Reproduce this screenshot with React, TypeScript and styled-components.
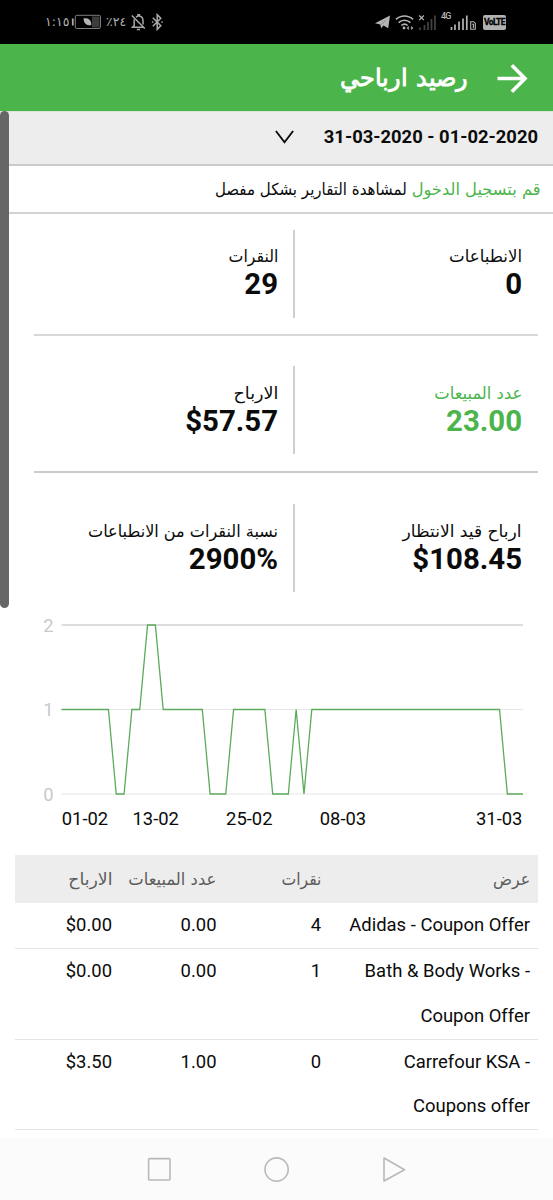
import React from 'react';
import styled, { createGlobalStyle } from 'styled-components';

const GREEN = '#4bb54b';
const LATIN = 'Roboto, sans-serif';
const ARABIC = '"DejaVu Sans", sans-serif';

const GlobalStyle = createGlobalStyle`
  * { box-sizing: border-box; }
  body {
    margin: 0;
    background: #fff;
    color: #0b0b0b;
    font-family: ${LATIN};
  }
`;

const Screen = styled.div`
  width: 553px;
  height: 1200px;
  display: flex;
  flex-direction: column;
  overflow: hidden;
  background: #fff;
`;

/* Status bar */

const StatusBar = styled.div`
  flex: none;
  height: 44px;
  padding: 0 47px 0 45px;
  display: flex;
  align-items: center;
  justify-content: space-between;
  background: #000;
  color: #b4b4b4;
`;

const StatusGroup = styled.div`
  height: 24px;
  display: flex;
  align-items: center;
`;

const StatusText = styled.span<{ $width: number; $gap?: number }>`
  flex: none;
  width: ${p => p.$width}px;
  margin-left: ${p => p.$gap ?? 0}px;
  font-family: ${ARABIC};
  font-size: 12.5px;
  line-height: 20px;
  direction: ltr;
  unicode-bidi: bidi-override;
  white-space: nowrap;
`;

const TimeText = styled(StatusText)`
  letter-spacing: -0.9px;
`;

const StatusIcon = styled.svg<{ $gap?: number }>`
  display: block;
  flex: none;
  margin-left: ${p => p.$gap ?? 0}px;
`;

const NetworkType = styled.span`
  align-self: flex-start;
  width: 9px;
  margin: 1px 0 0 4px;
  font: 500 9px/10px Roboto, sans-serif;
  letter-spacing: -0.9px;
`;

const VolteBadge = styled.span`
  width: 23px;
  height: 15px;
  margin-left: 7px;
  border-radius: 2px;
  background: #b2b2b2;
  color: #000;
  text-align: center;
  font: 700 8.5px/15px Roboto, sans-serif;
  letter-spacing: -0.6px;
  -webkit-text-stroke: 0.3px #000;
`;

/* Header */

const Header = styled.header`
  flex: none;
  height: 67px;
  padding: 0 25px 0 0;
  display: flex;
  align-items: center;
  gap: 29px;
  direction: rtl;
  background: ${GREEN};
  color: #fff;
`;

const Title = styled.h1`
  margin: 0;
  padding-top: 1px;
  font: 700 24px/32px ${LATIN};
  word-spacing: 2px;
  white-space: nowrap;
`;

/* Page content */

const Content = styled.main`
  position: relative;
  flex: 1;
  min-height: 0;
  direction: rtl;
`;

const ScrollThumb = styled.div`
  position: absolute;
  left: 0;
  top: 0;
  width: 9px;
  height: 497px;
  border-radius: 5px;
  background: #666;
`;

const DateBar = styled.div`
  height: 55px;
  padding: 0 15px 2px 0;
  display: flex;
  align-items: center;
  gap: 30px;
  border-top: 1px solid #d9e6d9;
  border-bottom: 2px solid #cbcbcb;
  background: #ededed;
`;

const DateRange = styled.span`
  direction: ltr;
  padding-bottom: 1px;
  font-size: 18.4px;
  font-weight: 700;
`;

const ArabicText = styled.span<{ $scale?: number; $tone?: string }>`
  display: inline-block;
  transform: scaleX(${p => p.$scale ?? 1});
  transform-origin: right center;
  color: ${p => p.$tone ?? 'inherit'};
  font-family: ${ARABIC};
  font-size: 16.6px;
  white-space: nowrap;
`;

const Notice = styled.div`
  height: 48px;
  padding: 1px 12px 0 0;
  display: flex;
  align-items: center;
  gap: 2.4px;
  border-bottom: 2px solid #d2d2d2;
`;

const Stats = styled.section`
  padding: 0 15px 0 34px;
`;

const StatRow = styled.div<{ $top: number; $bottom: number; $line?: string }>`
  display: grid;
  grid-template-columns: 243px 1fr;
  padding: ${p => p.$top}px 0 ${p => p.$bottom}px;
  border-bottom: ${p => (p.$line ? `2px solid ${p.$line}` : '0')};
`;

const StatCell = styled.div<{ $divided?: boolean; $green?: boolean; $inset: number }>`
  height: 88px;
  padding: ${p => p.$inset}px ${p => (p.$divided ? 15 : 16)}px 0 0;
  border-right: ${p => (p.$divided ? '2px solid #cfcfcf' : '0')};
  color: ${p => (p.$green ? GREEN : 'inherit')};
`;

const StatLabel = styled.div`
  height: 21px;
  line-height: 22px;
  display: flex;
  align-items: center;
`;

const StatValue = styled.div`
  direction: ltr;
  text-align: right;
  font-size: 29.4px;
  font-weight: 700;
  line-height: 34px;
`;

const Chart = styled.svg`
  display: block;
  direction: ltr;
  width: 553px;
  height: 263px;
  font: 18.4px ${LATIN};
`;

const Table = styled.section`
  padding: 0 15px;
`;

const TableRow = styled.div<{ $head?: boolean }>`
  display: grid;
  grid-template-columns: 209px 104.5px 104.5px 105px;
  line-height: ${p => (p.$head ? 50 : 44.6)}px;
  height: ${p => (p.$head ? '48px' : 'auto')};
  padding-bottom: ${p => (p.$head ? 0 : 0.4)}px;
  border-bottom: ${p => (p.$head ? '0' : '1px solid #e4e4e4')};
  background: ${p => (p.$head ? '#ededed' : 'transparent')};
  color: ${p => (p.$head ? '#5c5c5c' : 'inherit')};
`;

const Cell = styled.div`
  padding: 0 8px 0 8px;
  direction: ltr;
  text-align: right;
  font-size: 18.45px;
`;

const HeadCell = styled.div`
  padding-right: 8px;
  direction: rtl;
`;

const NavBar = styled.nav`
  flex: none;
  height: 62px;
  padding: 0 146px;
  display: flex;
  align-items: center;
  justify-content: space-between;
  background: #fbfbfb;
`;

type Stat = { label: string; value: string; scale: number; green?: boolean };

const stats: { top: number; bottom: number; inset: number; line?: string; cells: Stat[] }[] = [
  {
    top: 16,
    bottom: 16,
    inset: 16,
    line: '#d8d8d8',
    cells: [
      { label: 'الانطباعات', value: '0', scale: 1 },
      { label: 'النقرات', value: '29', scale: 0.95 },
    ],
  },
  {
    top: 30,
    bottom: 17,
    inset: 17,
    line: '#cbcbcb',
    cells: [
      { label: 'عدد المبيعات', value: '23.00', scale: 0.986, green: true },
      { label: 'الارباح', value: '$57.57', scale: 1.059 },
    ],
  },
  {
    top: 31,
    bottom: 0,
    inset: 17,
    cells: [
      { label: 'ارباح قيد الانتظار', value: '$108.45', scale: 1.03 },
      { label: 'نسبة النقرات من الانطباعات', value: '2900%', scale: 0.969 },
    ],
  },
];

const columns = [
  { label: 'عرض', scale: 0.946 },
  { label: 'نقرات', scale: 0.943 },
  { label: 'عدد المبيعات', scale: 0.986 },
  { label: 'الارباح', scale: 1.04 },
];

const offers = [
  ['Adidas - Coupon Offer', '4', '0.00', '$0.00'],
  ['Bath & Body Works - Coupon Offer', '1', '0.00', '$0.00'],
  ['Carrefour KSA - Coupons offer', '0', '1.00', '$3.50'],
];

/* Daily sales as [day index, value] corners, from 1 February to 31 March */
const series: [number, number][] = [
  [0, 1], [6, 1], [7, 0], [8, 0], [9, 1], [10, 1], [11, 2], [12, 2], [13, 1],
  [18, 1], [19, 0], [21, 0], [22, 1], [26, 1], [27, 0], [29, 0], [30, 1],
  [31, 0], [32, 1], [56, 1], [57, 0], [59, 0],
];

const chartX = (day: number) => 61.5 + (day * 461.5) / 59;
const chartY = (value: number) => 202 - value * 84.5;

const dateLabels: [string, number][] = [
  ['01-02', 85], ['13-02', 155.7], ['25-02', 249.3], ['08-03', 343], ['31-03', 499.2],
];

function SalesChart() {
  return (
    <Chart viewBox="0 0 553 263">
      {[2, 1, 0].map(v => (
        <g key={v}>
          <line
            x1="61.5"
            x2="523"
            y1={chartY(v)}
            y2={chartY(v)}
            stroke={v === 2 ? '#d2d2d2' : '#e6e6e6'}
            strokeWidth={v === 2 ? 1.6 : 1.2}
          />
          <text x="48.5" y={chartY(v) + 6.5} textAnchor="middle" fill="#c9c9c9">{v}</text>
        </g>
      ))}
      <polyline
        points={series.map(([d, v]) => `${chartX(d)},${chartY(v)}`).join(' ')}
        fill="none"
        stroke="#5cab5c"
        strokeWidth="1.3"
      />
      {dateLabels.map(([label, x]) => (
        <text key={label} x={x} y="233" textAnchor="middle" fill="#0b0b0b">{label}</text>
      ))}
    </Chart>
  );
}

function StatusIcons() {
  return (
    <StatusBar>
      <StatusGroup>
        <TimeText $width={26}>١:١٥</TimeText>
        <StatusIcon width="31" height="16" viewBox="0 0 31 16" fill="none">
          <path d="M1.8 4.5v7" stroke="#a9a9a9" strokeWidth="1.8" />
          <rect x="4.3" y="1.3" width="25.2" height="13.2" rx="1.6" stroke="#7c7c7c" strokeWidth="1" />
          <path d="M21 2.5h7.5v11H21z" fill="#3c3c3c" />
          <path d="M12.5 4.400c4-.4 8 .8 7.800 6.800-3.800.6-7.400-1-7.800-6.800z" fill="#b4b4b4" />
        </StatusIcon>
        <StatusText $width={22} $gap={4}>٪٢٤</StatusText>
        <StatusIcon $gap={3} width="15" height="17" viewBox="0 0 15 17" fill="none" stroke="#a9a9a9" strokeWidth="1.5">
          <path d="M.8 1.5l13 13" />
          <path d="M5 3.2C6 2.3 6.6 2.2 7 2V.8h1.4V2c2.5.6 3.6 2.5 3.6 4.7v3.8M3.2 5.3v6.2L1.6 13.2h11" />
          <path d="M5.8 15.5h3.3" />
        </StatusIcon>
        <StatusIcon $gap={5} width="13" height="18" viewBox="0 0 13 18" fill="none" stroke="#a9a9a9" strokeWidth="1.5">
          <path d="M1.8 4.8l8 8L6.2 16.4V1.6l3.6 3.6-8 8" />
          <path d="M.9 9h1.4M10.4 9h1.4" />
        </StatusIcon>
      </StatusGroup>
      <StatusGroup>
        <StatusIcon width="16" height="14" viewBox="0 0 16 14">
          <path d="M0 8.3L15 .5l-1.8 12.7-4.7-2.8-2.3 2.8-.9-3.7z" fill="#b4b4b4" />
          <path d="M6.3 9.5l4.200-4" stroke="#555" strokeWidth=".5" />
        </StatusIcon>
        <StatusIcon $gap={4} width="19" height="17" viewBox="0 0 19 17" fill="none" stroke="#b4b4b4" strokeWidth="1.6">
          <path d="M.9 5.400c5-4.600 12.200-4.600 17.200 0M3.600 8.600c3.400-3.100 8.400-3.100 11.800 0M6.300 11.500c1.900-1.600 4.500-1.600 6.400 0" />
          <circle cx="9" cy="14" r="1.4" fill="#b4b4b4" stroke="none" />
          <path d="M14 12.6l-1.6 1.4 1.6 1.4M16 12.6l1.6 1.4-1.6 1.4" strokeWidth="1.1" />
        </StatusIcon>
        <StatusIcon $gap={4} width="19" height="17" viewBox="0 0 19 17" fill="none">
          <path d="M1.2 1.5l4.6 4.6M5.8 1.5L1.2 6.1" stroke="#b4b4b4" strokeWidth="1.3" />
          <path d="M2 16v-2.5M6.5 16v-5M10 16V8M13.5 16V5M17 16V1.5" stroke="#444" strokeWidth="1.7" />
        </StatusIcon>
        <NetworkType>4G</NetworkType>
        <StatusIcon width="26" height="17" viewBox="0 0 26 17" fill="none">
          <path d="M1.5 16v-3M5 16v-5.5M9 16V7.5M13 16V4.5M16.8 16V1.5" stroke="#b4b4b4" strokeWidth="1.7" />
          <path d="M20.7 15.3V7.7h3l1.6 1.5v6.1z" stroke="#b4b4b4" strokeWidth="1.1" />
          <path d="M22.2 10.2h1.2v3.8" stroke="#b4b4b4" strokeWidth="1.1" />
        </StatusIcon>
        <VolteBadge>VoLTE</VolteBadge>
      </StatusGroup>
    </StatusBar>
  );
}

export default function App() {
  return (
    <Screen>
      <GlobalStyle />
      <StatusIcons />
      <Header>
        <svg width="31" height="32" viewBox="0 0 31 32" fill="none" stroke="#fff" strokeWidth="3.6">
          <path d="M.5 16.5h27.5M14.8 3.3l13.2 13.2-13.2 13.2" />
        </svg>
        <Title>رصيد ارباحي</Title>
      </Header>
      <Content>
        <DateBar>
          <DateRange>31-03-2020 - 01-02-2020</DateRange>
          <svg width="19" height="14" viewBox="0 0 19 14" fill="none" stroke="#0b0b0b" strokeWidth="1.9">
            <path d="M.9 1l8.6 11.3L18.1 1" />
          </svg>
        </DateBar>
        <Notice>
          <ArabicText $scale={0.98} $tone={GREEN}>قم بتسجيل الدخول</ArabicText>
          <ArabicText $scale={0.906}>لمشاهدة التقارير بشكل مفصل</ArabicText>
        </Notice>
        <Stats>
          {stats.map((row, i) => (
            <StatRow key={i} $top={row.top} $bottom={row.bottom} $line={row.line}>
              {row.cells.map((cell, j) => (
                <StatCell key={cell.label} $inset={row.inset} $divided={j === 1} $green={cell.green}>
                  <StatLabel>
                    <ArabicText $scale={cell.scale}>{cell.label}</ArabicText>
                  </StatLabel>
                  <StatValue>{cell.value}</StatValue>
                </StatCell>
              ))}
            </StatRow>
          ))}
        </Stats>
        <SalesChart />
        <Table>
          <TableRow $head>
            {columns.map(col => (
              <HeadCell key={col.label}>
                <ArabicText $scale={col.scale}>{col.label}</ArabicText>
              </HeadCell>
            ))}
          </TableRow>
          {offers.map(offer => (
            <TableRow key={offer[0]}>
              {offer.map((text, i) => <Cell key={i}>{text}</Cell>)}
            </TableRow>
          ))}
        </Table>
        <ScrollThumb />
      </Content>
      <NavBar>
        <svg width="26" height="28" viewBox="0 0 26 28" fill="none" stroke="#b9b9b9" strokeWidth="1.6">
          <rect x="2.6" y="3.6" width="21.4" height="21.4" rx="1" />
        </svg>
        <svg width="27" height="28" viewBox="0 0 27 28" fill="none" stroke="#b9b9b9" strokeWidth="1.6">
          <circle cx="13.6" cy="14.5" r="11.6" />
        </svg>
        <svg width="26" height="28" viewBox="0 0 26 28" fill="none" stroke="#b9b9b9" strokeWidth="1.6" strokeLinejoin="round">
          <path d="M3 3l20.5 11.7L3 26z" />
        </svg>
      </NavBar>
    </Screen>
  );
}
